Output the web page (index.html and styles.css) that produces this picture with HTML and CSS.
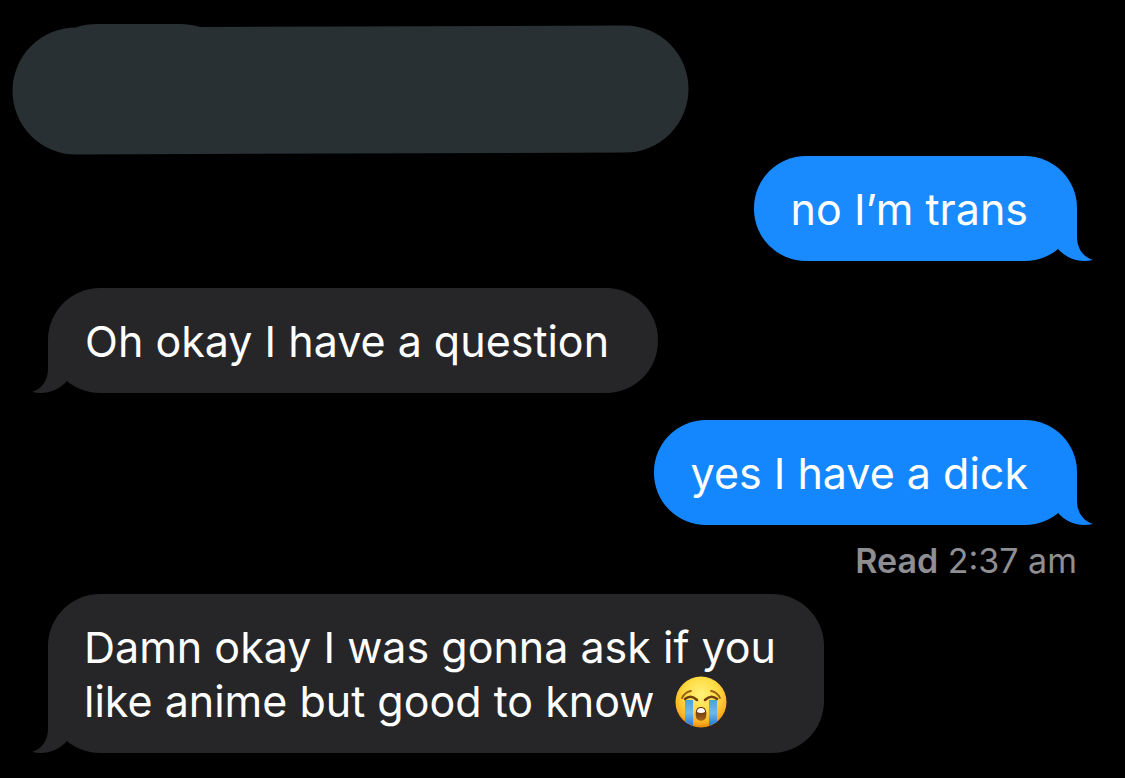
FILE: index.html
```
<!DOCTYPE html>
<html lang="en">
<head>
<meta charset="utf-8">
<meta name="viewport" content="width=device-width, initial-scale=1">
<title>Messages</title>
<link rel="stylesheet" href="styles.css">
</head>
<body>
<main class="thread">
  <div class="redacted" aria-label="Hidden message">
    <svg class="redacted-shape" viewBox="0 0 676 130" preserveAspectRatio="none" aria-hidden="true">
      <path d="M64 3.500C73 0 82 0 90 0H165C175 0 181 1 188 3L612 1.500A63.500 63.500 0 0 1 612 128.500L64 130.500A63.500 63.500 0 0 1 64 3.500Z"/>
    </svg>
  </div>
  <div class="message sent">
    <p class="text">no I’m trans</p>
    <svg class="tail" viewBox="0 -8 46 52" aria-hidden="true"><path d="M19 -8H30V20C30 31 36 40 46 43C33 46 20 42 11 32L19 20Z"/></svg>
  </div>
  <div class="message received">
    <p class="text">Oh okay I have a question</p>
    <svg class="tail" viewBox="0 -8 46 52" aria-hidden="true"><path d="M19 -8H30V20C30 31 36 40 46 43C33 46 20 42 11 32L19 20Z"/></svg>
  </div>
  <div class="message sent latest">
    <p class="text">yes I have a dick</p>
    <svg class="tail" viewBox="0 -8 46 52" aria-hidden="true"><path d="M19 -8H30V20C30 31 36 40 46 43C33 46 20 42 11 32L19 20Z"/></svg>
  </div>
  <p class="receipt"><strong>Read</strong> <time datetime="02:37">2:37 am</time></p>
  <div class="message received">
    <p class="text">Damn okay I was gonna ask if you like anime but good to know <svg class="emoji" viewBox="0 0 52 52" role="img" aria-label="Loudly crying face">
      <defs>
        <radialGradient id="face" cx=".5" cy=".35" r=".65"><stop offset="0" stop-color="#fff27a"/><stop offset=".5" stop-color="#ffdc43"/><stop offset=".85" stop-color="#fbb021"/><stop offset="1" stop-color="#e8860f"/></radialGradient>
        <linearGradient id="tear" x2="0" y2="1"><stop offset="0" stop-color="#4f9fdc"/><stop offset=".5" stop-color="#6db9ea"/><stop offset="1" stop-color="#2676d2"/></linearGradient>
        <linearGradient id="mouth" x2="0" y2="1"><stop offset="0" stop-color="#542507"/><stop offset="1" stop-color="#a5661d"/></linearGradient>
      </defs>
      <circle cx="26" cy="26" r="25.500" fill="url(#face)"/>
      <path d="M10 24H18V50Q14 48 10 46ZM34 24H42V46Q38 48 34 50Z" fill="url(#tear)"/>
      <path d="M10 23Q16 18 22 24M30 24Q36 18 42 23" fill="none" stroke="#70400c" stroke-width="2.500" stroke-linecap="round"/>
      <path d="M7 22Q10 16 16 15M36 15Q42 16 45 22" fill="none" stroke="#9a5e12" stroke-width="1.800" stroke-linecap="round"/>
      <path d="M26 31C31 31 32 36 31 41C30 46 22 46 21 41C20 36 21 31 26 31Z" fill="url(#mouth)"/>
      <path d="M22 36Q22 32 26 32T30 36Q26 38 22 36Z" fill="#fff"/>
    </svg></p>
    <svg class="tail" viewBox="0 -8 46 52" aria-hidden="true"><path d="M19 -8H30V20C30 31 36 40 46 43C33 46 20 42 11 32L19 20Z"/></svg>
  </div>
</main>
</body>
</html>
```
FILE: styles.css
```
body {
  margin: 0;
  background: #000;
  color: #fff;
  font-family: Inter, "Liberation Sans", sans-serif;
}

.thread {
  display: flex;
  flex-direction: column;
  padding: 24px 48px;
}

.redacted {
  width: 677px;
  height: 130px;
  margin-left: -36px;
  margin-bottom: 2px;
}

.redacted-shape {
  display: block;
  width: 100%;
  height: 100%;
  overflow: visible;
  fill: #293033;
}

.message {
  position: relative;
  max-width: 776px;
  box-sizing: border-box;
  padding: 26px 49px 25px 37px;
  border-radius: 52px;
  margin-bottom: 27px;
}

.message:last-child {
  padding-right: 48px;
  padding-left: 36px;
  margin-bottom: 0;
}

.text {
  margin: 0;
  font-size: 43px;
  line-height: 54px;
}

.sent {
  align-self: flex-end;
  background: #1a8aff;
  color: #fff;
  fill: #1a8aff;
}

.received {
  align-self: flex-start;
  background: #262628;
  fill: #262628;
}

.latest {
  background: #1487ff;
  fill: #1487ff;
  margin-bottom: 16px;
}

.tail {
  position: absolute;
  right: -16px;
  bottom: 0;
  width: 46px;
  height: 52px;
}

.received .tail {
  right: auto;
  left: -16px;
  transform: scaleX(-1);
}

.receipt {
  align-self: flex-end;
  margin: 0 0 13px;
  color: #8e8e93;
  font-size: 34px;
  line-height: 40px;
}

.receipt strong {
  font-weight: 600;
}

.emoji {
  width: 52px;
  height: 52px;
  margin: -4px 0 -4px 8px;
  vertical-align: -7px;
}
```
